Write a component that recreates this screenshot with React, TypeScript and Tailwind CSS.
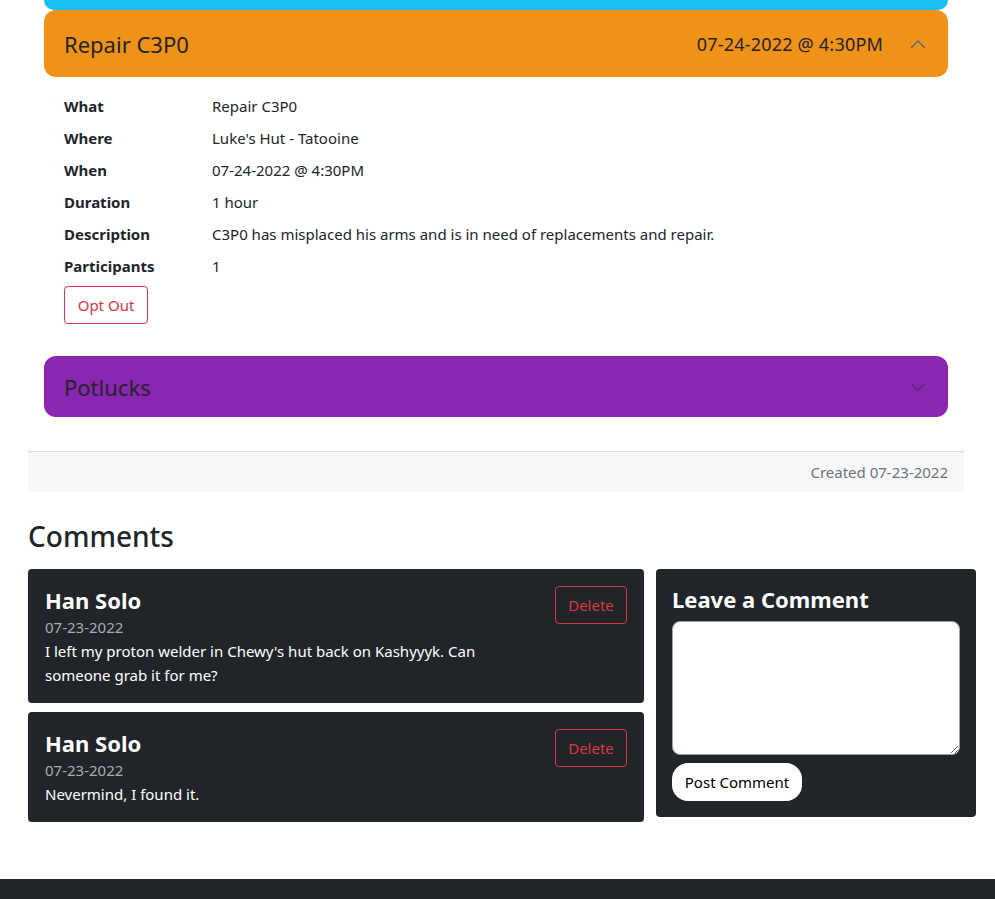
const font = {fontFamily: '"Noto Sans", "Open Sans", Arial, sans-serif'};

const details: [string, string][] = [
	['What', 'Repair C3P0'],
	['Where', "Luke's Hut - Tatooine"],
	['When', '07-24-2022 @ 4:30PM'],
	['Duration', '1 hour'],
	['Description', 'C3P0 has misplaced his arms and is in need of replacements and repair.'],
	['Participants', '1'],
];

const comments = [
	{
		name: 'Han Solo',
		date: '07-23-2022',
		text: "I left my proton welder in Chewy's hut back on Kashyyyk. Can someone grab it for me?",
	},
	{name: 'Han Solo', date: '07-23-2022', text: 'Nevermind, I found it.'},
];

const Chevron = ({up, color}: {up?: boolean; color: string}) => (
	<svg width="16" height="16" viewBox="0 0 16 16" fill="none">
		<path
			d={up ? 'M1.5 11.5 8 5l6.5 6.5' : 'M1.5 5 8 11.5 14.5 5'}
			stroke={color}
			strokeWidth="1.3"
			strokeLinecap="round"
			strokeLinejoin="round"
		/>
	</svg>
);

const App = () => {
	return (
		<div className="relative min-h-[899px] w-full overflow-hidden bg-white text-[#212529]" style={font}>
			<div className="ml-[28px] w-[948px]">
				<div className="w-[936px]">
					<div className="px-[16px]">
						<div className="h-[10px] rounded-b-[12px] bg-[#18bff0]" />
						<div className="flex h-[67px] items-center rounded-[12px] bg-[#f09118] pl-[20px] pr-[22px]">
							<span className="text-[22px] leading-none">Repair C3P0</span>
							<span className="ml-auto text-[18px] leading-none tracking-[0.2px]">07-24-2022 @ 4:30PM</span>
							<span className="ml-[27px] flex">
								<Chevron up color="#4f6386" />
							</span>
						</div>

						<div className="pl-[20px] pt-[17px]">
							<div className="flex flex-col gap-[8px]">
								{details.map(([label, value]) => (
									<div key={label} className="flex text-[15px] leading-[24px]">
										<span className="w-[148px] shrink-0 font-bold">{label}</span>
										<span>{value}</span>
									</div>
								))}
							</div>
							<button className="mt-[8px] h-[38px] w-[84px] rounded-[4px] border border-[#dc3545] text-[15px] text-[#dc3545]">
								Opt Out
							</button>
						</div>

						<div className="mt-[32px] flex h-[61px] items-center rounded-[12px] bg-[#8a26b2] pl-[20px] pr-[22px]">
							<span className="text-[22px] leading-none">Potlucks</span>
							<span className="ml-auto flex">
								<Chevron color="#5b2a6e" />
							</span>
						</div>
					</div>

					<div className="mt-[34px] flex h-[41px] items-center justify-end border-t border-[#dcdcdc] bg-[#f7f7f7] pr-[16px] text-[15px] text-[#6c757d]">
						Created 07-23-2022
					</div>
				</div>

				<h2 className="mt-[27px] text-[28px] font-medium leading-[34px]">Comments</h2>

				<div className="mt-[16px] flex items-start gap-[12px]">
					<div className="flex w-[616px] flex-col gap-[9px]">
						{comments.map((c, i) => (
							<div key={i} className="flex items-start justify-between rounded-[4px] bg-[#212529] px-[17px] pb-[16px] pt-[17px]">
								<div className="w-[455px]">
									<div className="text-[22px] font-bold leading-[29px] text-white">{c.name}</div>
									<div className="text-[15px] leading-[24px] text-[#a7acb1]">{c.date}</div>
									<div className="text-[15px] leading-[24px] text-white">{c.text}</div>
								</div>
								<button className="h-[38px] w-[72px] rounded-[4px] border border-[#dc3545] text-[15px] text-[#dc3545]">
									Delete
								</button>
							</div>
						))}
					</div>

					<div className="w-[320px] rounded-[4px] bg-[#212529] px-[16px] pb-[16px] pt-[16px]">
						<div className="text-[22px] font-bold leading-[29px] text-white">Leave a Comment</div>
						<textarea className="mt-[7px] block h-[134px] w-full resize-y rounded-[8px] border border-[#9aa0a6] bg-white" />
						<button className="mt-[8px] h-[38px] w-[130px] rounded-[16px] bg-white text-[15px] text-black">
							Post Comment
						</button>
					</div>
				</div>
			</div>

			<div className="absolute bottom-0 left-0 h-[20px] w-full bg-[#212529]" />
		</div>
	);
};

export default App;
